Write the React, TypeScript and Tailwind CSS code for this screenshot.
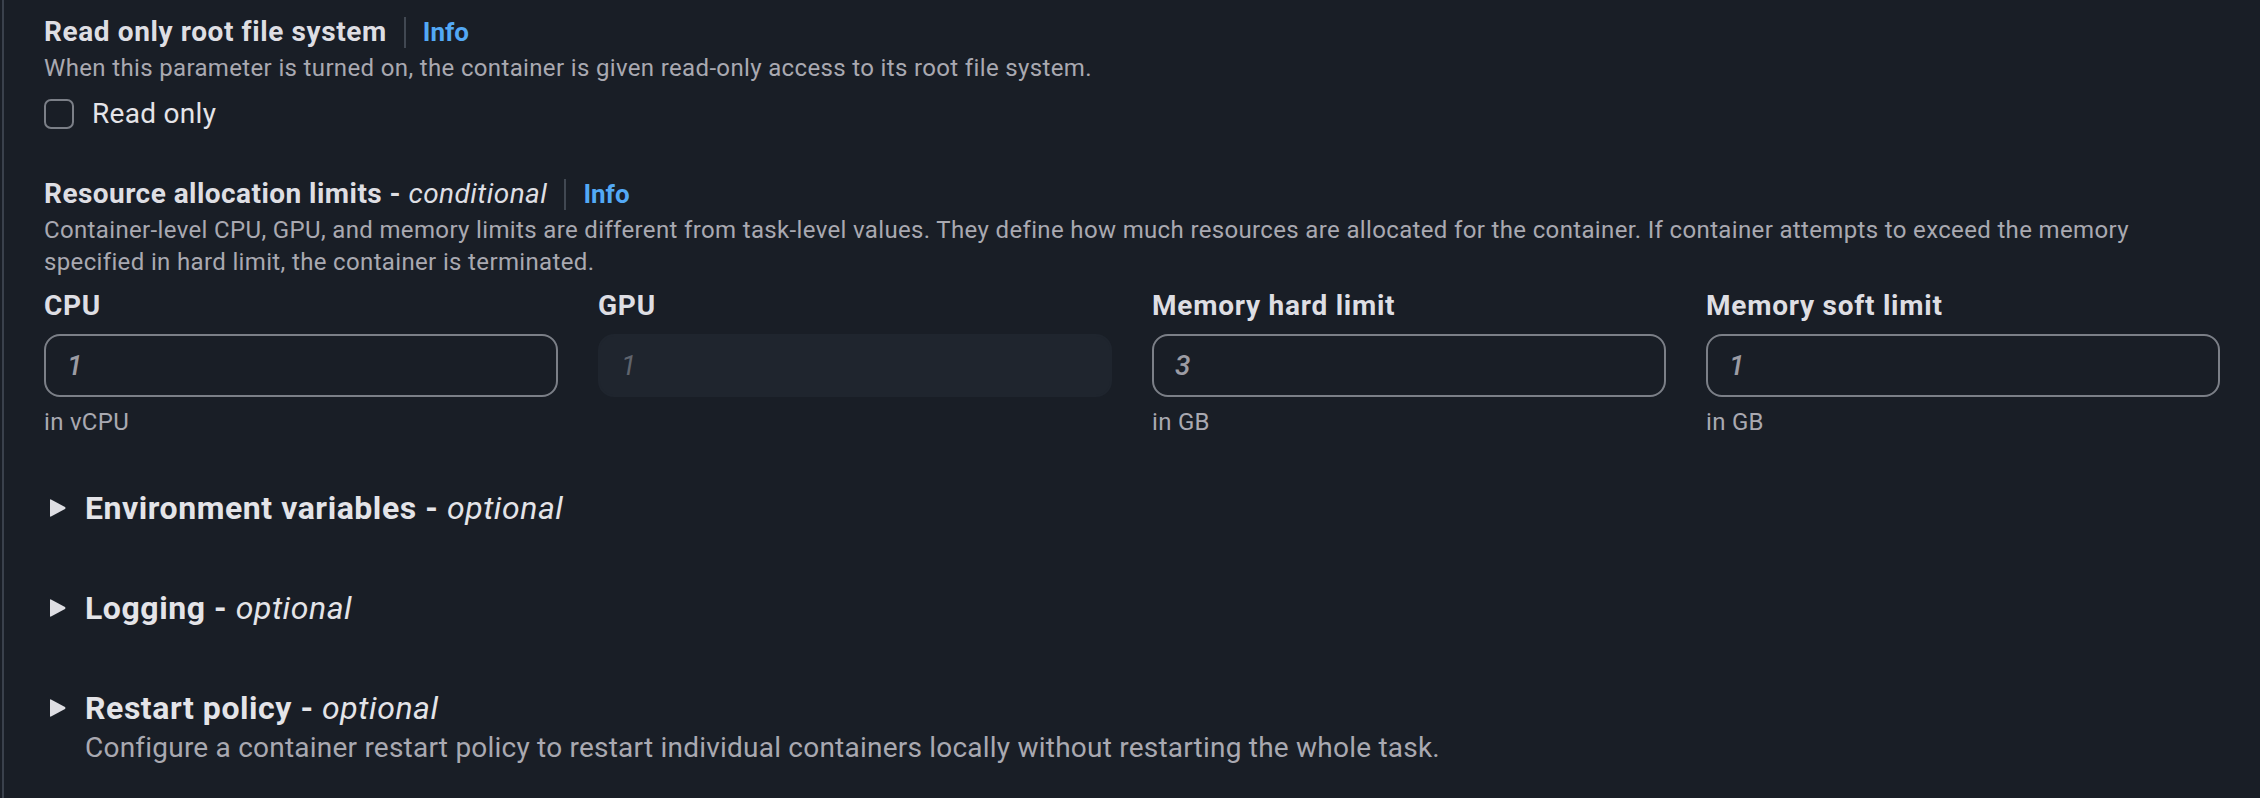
import React from 'react';

const font = "font-[Roboto,'Liberation_Sans',sans-serif]";

function Info() {
  return (
    <>
      <span className="mx-[17px] h-[31px] w-[2px] bg-[#414852]" />
      <span className="text-[26px] font-bold text-[#53a9f5]">Info</span>
    </>
  );
}

function Caret() {
  return (
    <svg width="16" height="20" viewBox="0 0 16 20" className="ml-[6px] mr-[19px] shrink-0">
      <path d="M1 1.5 L15 9 Q16 10 15 11 L1 18.5 Q0 19 0 18 L0 2 Q0 1 1 1.5 Z" fill="#dedee3" />
    </svg>
  );
}

function Field({ label, value, hint, disabled }: { label: string; value: string; hint?: string; disabled?: boolean }) {
  return (
    <div className="flex flex-col">
      <div className="h-[40px] leading-[40px] text-[28px] font-bold tracking-[0.75px] text-[#dedee3]">{label}</div>
      <div
        className={
          disabled
            ? 'mt-2 flex h-[63px] items-center rounded-[16px] border-2 border-[#1f252e] bg-[#1f252e] pl-[21px]'
            : 'mt-2 flex h-[63px] items-center rounded-[16px] border-2 border-[#7b7f87] pl-[21px]'
        }
      >
        <span className={disabled ? 'text-[28px] italic text-[#5f646d]' : 'text-[28px] font-medium italic text-[#9c9ca4]'}>{value}</span>
      </div>
      {hint && <div className="mt-[9px] h-[32px] leading-[32px] text-[24px] tracking-[0.3px] text-[#a9a9b1]">{hint}</div>}
    </div>
  );
}

function Section({ title, desc }: { title: string; desc?: string }) {
  return (
    <div className="flex flex-col">
      <div className="flex h-[44px] items-center">
        <Caret />
        <span className="text-[32px] font-bold tracking-[0.55px] text-[#e4e4e8]">
          {title} - <i className="font-normal">optional</i>
        </span>
      </div>
      {desc && <div className="pl-[41px] leading-[36px] text-[28px] tracking-[0.22px] text-[#a9a9b1]">{desc}</div>}
    </div>
  );
}

export default function App() {
  return (
    <div className={`${font} min-h-[798px] w-[2260px] bg-[#191e26] pl-[2px]`}>
      <div className="min-h-[798px] border-l-2 border-[#3a414c] pl-[40px] pr-[40px] pt-[12px]">
        <div className="flex h-[40px] items-center">
          <span className="text-[28px] font-bold tracking-[0.6px] text-[#dedee3]">Read only root file system</span>
          <Info />
        </div>
        <div className="leading-[32px] text-[24px] tracking-[0.35px] text-[#a9a9b1]">
          When this parameter is turned on, the container is given read-only access to its root file system.
        </div>
        <label className="mt-[10px] flex h-[40px] items-center">
          <span className="h-[30px] w-[30px] rounded-[7px] border-2 border-[#7b7f87]" />
          <span className="ml-[18px] text-[28px] tracking-[0.3px] text-[#e4e4e8]">Read only</span>
        </label>

        <div className="mt-[40px] flex h-[40px] items-center">
          <span className="text-[28px] font-bold tracking-[0.45px] text-[#dedee3]">
            Resource allocation limits - <i className="font-normal">conditional</i>
          </span>
          <Info />
        </div>
        <div className="pr-[40px] leading-[32px] text-[24px] tracking-[0.35px] text-[#a9a9b1]">
          Container-level CPU, GPU, and memory limits are different from task-level values. They define how much resources are allocated for the container. If container attempts to exceed the memory specified in hard limit, the container is terminated.
        </div>

        <div className="mt-2 grid grid-cols-4 gap-x-[40px]">
          <Field label="CPU" value="1" hint="in vCPU" />
          <Field label="GPU" value="1" disabled />
          <Field label="Memory hard limit" value="3" hint="in GB" />
          <Field label="Memory soft limit" value="1" hint="in GB" />
        </div>

        <div className="mt-[48px] flex flex-col gap-[56px]">
          <Section title="Environment variables" />
          <Section title="Logging" />
          <Section
            title="Restart policy"
            desc="Configure a container restart policy to restart individual containers locally without restarting the whole task."
          />
        </div>
      </div>
    </div>
  );
}
